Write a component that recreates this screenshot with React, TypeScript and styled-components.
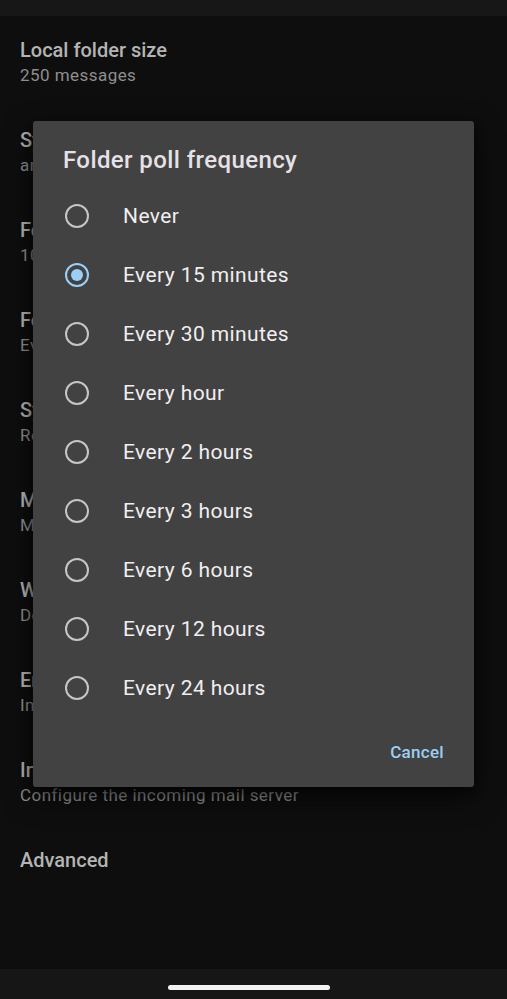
import React from "react";
import styled, { createGlobalStyle } from "styled-components";

const GlobalStyle = createGlobalStyle`
  html, body {
    margin: 0;
    padding: 0;
    background: #0e0e0e;
  }
  body {
    font-family: Roboto, "Noto Sans", "Liberation Sans", sans-serif;
    -webkit-font-smoothing: antialiased;
  }
`;

const Screen = styled.div`
  position: relative;
  width: 507px;
  height: 999px;
  overflow: hidden;
  background: #0e0e0e;
  display: flex;
  flex-direction: column;
`;

const StatusStrip = styled.div`
  height: 16px;
  flex-shrink: 0;
  background: #171717;
`;

const SettingsList = styled.div`
  flex: 1;
  display: flex;
  flex-direction: column;
`;

const SettingItem = styled.div`
  height: 90px;
  box-sizing: border-box;
  padding: 21px 20px 0;
  display: flex;
  flex-direction: column;
`;

const SettingTitle = styled.div`
  font-size: 20px;
  line-height: 26px;
  font-weight: 500;
  color: #b4b4b4;
  white-space: nowrap;
`;

const SettingSummary = styled.div`
  margin-top: 1px;
  font-size: 17px;
  line-height: 22px;
  color: #8e8e8e;
  letter-spacing: 0.45px;
  white-space: nowrap;
`;

const NavBar = styled.div`
  height: 30px;
  flex-shrink: 0;
  background: #161616;
  display: flex;
  align-items: center;
  justify-content: center;
`;

const NavHandle = styled.div`
  width: 162px;
  height: 5px;
  border-radius: 3px;
  background: #f2f2f2;
  margin: 6px 9px 0 0;
`;

const Dialog = styled.div`
  position: absolute;
  left: 33px;
  top: 121px;
  width: 441px;
  height: 666px;
  box-sizing: border-box;
  background: #424242;
  border-radius: 3px;
  box-shadow: 0 10px 28px rgba(0, 0, 0, 0.6), 0 4px 10px rgba(0, 0, 0, 0.45);
  display: flex;
  flex-direction: column;
  padding: 24px 22px 17px 0;
`;

const DialogTitle = styled.div`
  padding-left: 30px;
  font-size: 24px;
  line-height: 30px;
  font-weight: 500;
  color: #e6e1e6;
  letter-spacing: 0.4px;
`;

const OptionList = styled.div`
  margin-top: 11px;
  display: flex;
  flex-direction: column;
`;

const OptionRow = styled.div`
  height: 59px;
  display: flex;
  align-items: center;
  padding-left: 32px;
`;

const Radio = styled.div<{ $checked: boolean }>`
  width: 24px;
  height: 24px;
  box-sizing: border-box;
  border-radius: 50%;
  border: 2px solid ${(p) => (p.$checked ? "#9ccff7" : "#c9c4ca")};
  display: flex;
  align-items: center;
  justify-content: center;
  flex-shrink: 0;

  &::after {
    content: "";
    width: 12px;
    height: 12px;
    border-radius: 50%;
    background: #9ccff7;
    display: ${(p) => (p.$checked ? "block" : "none")};
  }
`;

const OptionLabel = styled.div`
  margin-left: 34px;
  font-size: 21px;
  line-height: 26px;
  color: #f1eef1;
  letter-spacing: 0.4px;
`;

const Actions = styled.div`
  margin-top: auto;
  display: flex;
  justify-content: flex-end;
`;

const TextButton = styled.button`
  background: none;
  border: none;
  padding: 0 8px;
  height: 36px;
  font-family: inherit;
  font-size: 17px;
  font-weight: 500;
  color: #9ccff5;
  letter-spacing: 0.3px;
  cursor: pointer;
`;

const settings = [
  { title: "Local folder size", summary: "250 messages" },
  { title: "Sync messages from", summary: "any time" },
  { title: "Folders to display", summary: "10 KiB" },
  { title: "Folder poll frequency", summary: "Every 15 minutes" },
  { title: "Sync server deletions", summary: "Remove messages when deleted on server" },
  { title: "Mark as read", summary: "Mark message as read when opened" },
  { title: "When I delete a message", summary: "Delete from server" },
  { title: "Erase deleted messages on server", summary: "Immediately" },
  { title: "Incoming server", summary: "Configure the incoming mail server" },
  { title: "Advanced" },
];

const options = [
  "Never",
  "Every 15 minutes",
  "Every 30 minutes",
  "Every hour",
  "Every 2 hours",
  "Every 3 hours",
  "Every 6 hours",
  "Every 12 hours",
  "Every 24 hours",
];

const App: React.FC = () => {
  const selected = "Every 15 minutes";
  return (
    <>
      <GlobalStyle />
      <Screen>
        <StatusStrip />
        <SettingsList>
          {settings.map((s) => (
            <SettingItem key={s.title}>
              <SettingTitle>{s.title}</SettingTitle>
              {s.summary && <SettingSummary>{s.summary}</SettingSummary>}
            </SettingItem>
          ))}
        </SettingsList>
        <NavBar>
          <NavHandle />
        </NavBar>

        <Dialog>
          <DialogTitle>Folder poll frequency</DialogTitle>
          <OptionList>
            {options.map((o) => (
              <OptionRow key={o}>
                <Radio $checked={o === selected} />
                <OptionLabel>{o}</OptionLabel>
              </OptionRow>
            ))}
          </OptionList>
          <Actions>
            <TextButton>Cancel</TextButton>
          </Actions>
        </Dialog>
      </Screen>
    </>
  );
};

export default App;
